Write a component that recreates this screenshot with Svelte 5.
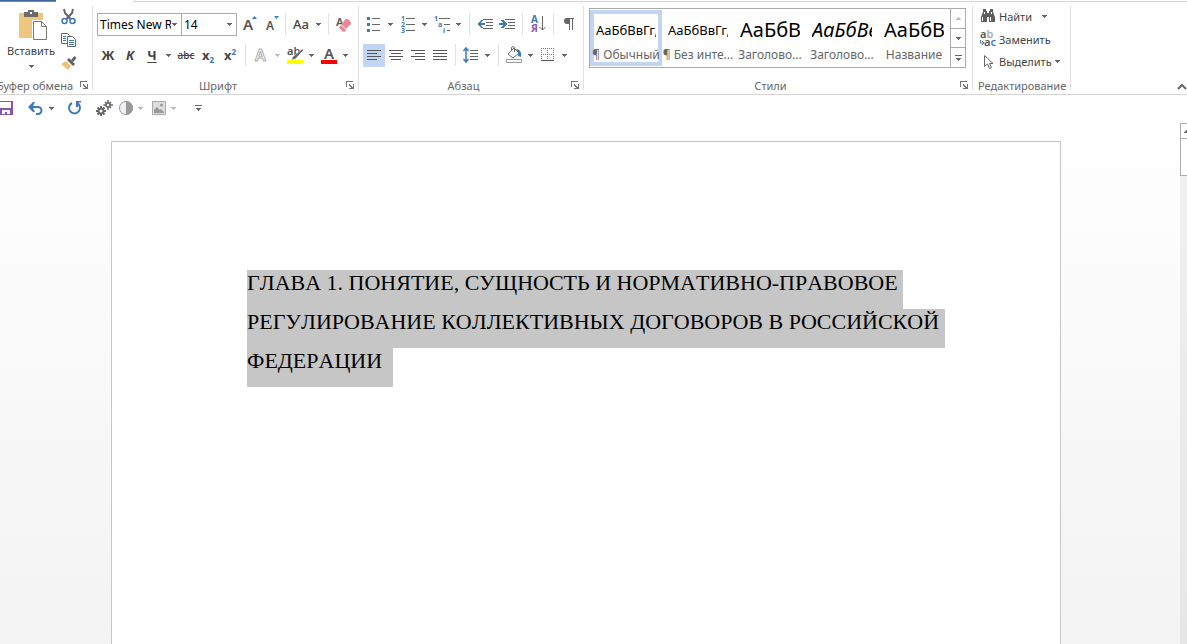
<script lang="ts">
  interface StyleItem {
    name: string;
    sample: string;
    kind: string;
  }

  const styles: StyleItem[] = [
    { name: "¶ Обычный", sample: "АаБбВвГг,", kind: "normal" },
    { name: "¶ Без инте...", sample: "АаБбВвГг,", kind: "normal" },
    { name: "Заголово...", sample: "АаБбВ", kind: "heading" },
    { name: "Заголово...", sample: "АаБбВв", kind: "heading italic" },
    { name: "Название", sample: "АаБбВ", kind: "heading" },
  ];

  const lines = [
    "ГЛАВА 1. ПОНЯТИЕ, СУЩНОСТЬ И НОРМАТИВНО-ПРАВОВОЕ ",
    "РЕГУЛИРОВАНИЕ КОЛЛЕКТИВНЫХ ДОГОВОРОВ В РОССИЙСКОЙ ",
    "ФЕДЕРАЦИИ  ",
  ];

  const alignments = [
    { id: "left", label: "По левому краю", path: "M0 1h14M0 4h10M0 7h14M0 10h10" },
    { id: "center", label: "По центру", path: "M0 1h14M2 4h10M0 7h14M2 10h10" },
    { id: "right", label: "По правому краю", path: "M0 1h14M4 4h10M0 7h14M4 10h10" },
    { id: "justify", label: "По ширине", path: "M0 1h14M0 4h14M0 7h14M0 10h14" },
  ];

  let activeStyle = $state(0);
  let align = $state("left");
</script>

{#snippet caret()}
  <svg class="caret" width="5" height="3" viewBox="0 0 5 3"><path d="M0 0h5v1h-1v1h-1v1h-1v-1h-1v-1h-1z" /></svg>
{/snippet}

{#snippet drop(label: string, faded = false)}
  <button class="drop" class:faded aria-label={label}>{@render caret()}</button>
{/snippet}

{#snippet launcher(label: string)}
  <button class="launcher" aria-label={label}>
    <svg width="8" height="8" viewBox="0 0 8 8" class="crisp">
      <path d="M0 0h7v1h-6v5h-1zM3 3h1v1h1v1h1v1h1v-3h1v5h-5v-1h2v-1h-1v-1h-1z" fill="#777" />
    </svg>
  </button>
{/snippet}

<div class="app">
  <div class="tabs">
    <span class="file-tab"></span>
    <span class="open-tab"></span>
    <span class="tab-line"></span>
  </div>

  <div class="ribbon">
    <section class="group clipboard">
      <div class="body">
        <button class="paste">
          <svg width="32" height="30" viewBox="-4 0 32 30">
            <path d="M0 3h24v25H0z" fill="#eec77f" />
            <path d="M5 2h4V0h6v2h4v5H5z" fill="#6b6b6b" />
            <path d="M11 2h2v2h-2z" fill="#fff" />
            <path d="M13 10h11l5 5v15H13z" fill="#fff" />
            <path d="M14.500 11.500h8l5 5v13h-13z" fill="#fff" stroke="#777" />
            <path d="M22.500 11.500v5h5" fill="none" stroke="#777" />
          </svg>
          <span>Вставить</span>
          {@render caret()}
        </button>
        <div class="tools">
          <button aria-label="Вырезать">
            <svg width="16" height="16" viewBox="0 0 16 16" fill="none">
              <path d="M3 0l1 4 5.500 6M12 0l-1 4-5.500 6" stroke="#666" stroke-width="2" />
              <circle cx="3.500" cy="12" r="2.500" stroke="#3f7ab8" stroke-width="1.500" />
              <circle cx="11.500" cy="12" r="2.500" stroke="#3f7ab8" stroke-width="1.500" />
            </svg>
          </button>
          <button aria-label="Копировать">
            <svg width="16" height="15" viewBox="0 0 16 15" fill="#fff" stroke="#666">
              <path d="M.5.5h6l2 2v8h-8z" />
              <path d="M2 3.500h3M2 5.500h3M2 7.500h3" stroke="#3f7ab8" />
              <path d="M6.500 3.500h5l3 3v7h-8z" />
              <path d="M8 7.500h5M8 9.500h5M8 11.500h5" stroke="#3f7ab8" />
            </svg>
          </button>
          <button aria-label="Формат по образцу">
            <svg width="16" height="15" viewBox="0 0 16 15">
              <path d="M0 8l5-3 5 5-3 4z" fill="#eec07a" />
              <path d="M6 4l2-2 6 6-2 2z" fill="#5f5f5f" />
              <path d="M10 4l3.500-4 2 2L12 6z" fill="#5f5f5f" />
            </svg>
          </button>
        </div>
      </div>
      <footer><span class="title">Буфер обмена</span>{@render launcher("Параметры буфера обмена")}</footer>
    </section>

    <section class="group font">
      <div class="body rows">
        <div class="row">
          <label class="combo family">
            <select aria-label="Шрифт"><option>Times New R</option></select>{@render caret()}
          </label>
          <label class="combo size">
            <select aria-label="Размер шрифта"><option>14</option></select>{@render caret()}
          </label>
          <button class="tool" aria-label="Увеличить размер">
            <svg width="18" height="18" viewBox="0 0 18 18">
              <text x="3" y="15" class="glyph" font-size="15">A</text>
              <path d="M12 4h5l-2.500-3z" fill="#3f7ab8" />
            </svg>
          </button>
          <button class="tool" aria-label="Уменьшить размер">
            <svg width="18" height="18" viewBox="0 0 18 18">
              <text x="4" y="15" class="glyph" font-size="12">A</text>
              <path d="M12 1h5l-2.500 3z" fill="#3f7ab8" />
            </svg>
          </button>
          <span class="divider narrow"></span>
          <button class="tool case">Aa</button>
          {@render drop("Регистр")}
          <span class="divider narrow"></span>
          <button class="tool" aria-label="Очистить форматирование">
            <svg width="16" height="18" viewBox="0 0 16 18">
              <text x="1" y="11" class="glyph" font-size="11">A</text>
              <path d="M4.500 11.500l6-7.500q1.500-1 4 1.500t1 4l-5 5z" fill="#e8899a" />
              <path d="M3.500 12.500l4 4.500h3l1-2-5.500-5.500z" fill="#e8899a" stroke="#fff" stroke-width=".8" />
            </svg>
          </button>
        </div>
        <div class="row">
          <button class="tool bold">Ж</button>
          <button class="tool bold italic">К</button>
          <button class="tool bold underline">Ч</button>
          {@render drop("Вид подчёркивания")}
          <button class="tool strike">abc</button>
          <button class="tool bold index">x<sub>2</sub></button>
          <button class="tool bold index">x<sup>2</sup></button>
          <span class="divider"></span>
          <button class="tool" aria-label="Текстовые эффекты">
            <svg width="18" height="20" viewBox="0 0 18 20">
              <text x="3" y="16" font-size="16" class="outline">A</text>
            </svg>
          </button>
          {@render drop("Эффекты", true)}
          <button class="tool" aria-label="Цвет выделения текста">
            <svg width="18" height="20" viewBox="0 0 18 20">
              <text x="1" y="10" class="glyph" font-size="11">ab</text>
              <path d="M16 4l1.500 1-8 9-4 1 1-3z" fill="#666" stroke="#fff" stroke-width=".5" />
              <path d="M1 15h16v4H1z" fill="#ff0" />
            </svg>
          </button>
          {@render drop("Выбрать цвет выделения")}
          <button class="tool" aria-label="Цвет текста">
            <svg width="18" height="20" viewBox="0 0 18 20">
              <text x="4" y="14" class="glyph" font-size="15">A</text>
              <path d="M1 15h16v4H1z" fill="#f00" />
            </svg>
          </button>
          {@render drop("Выбрать цвет текста")}
        </div>
      </div>
      <footer><span class="title">Шрифт</span>{@render launcher("Параметры шрифта")}</footer>
    </section>

    <section class="group paragraph">
      <div class="body rows">
        <div class="row">
          <button class="tool" aria-label="Маркеры">
            <svg width="14" height="16" viewBox="0 0 14 16" class="crisp">
              <path d="M0 1h3v3H0zM0 7h3v3H0zM0 13h3v3H0z" fill="#3f7ab8" />
              <path d="M5 2h8v1H5zM5 8h8v1H5zM5 14h8v1H5z" fill="#666" />
            </svg>
          </button>
          {@render drop("Библиотека маркеров")}
          <button class="tool" aria-label="Нумерация">
            <svg width="16" height="18" viewBox="0 0 16 18">
              <g class="digits"><text x="1" y="6">1</text><text x="1" y="12">2</text><text x="1" y="18">3</text></g>
              <path d="M6 3h9v1H6zM6 9h9v1H6zM6 15h9v1H6z" fill="#666" />
            </svg>
          </button>
          {@render drop("Библиотека нумерации")}
          <button class="tool" aria-label="Многоуровневый список">
            <svg width="18" height="18" viewBox="0 0 18 18">
              <g class="digits"><text x="1" y="6">1</text><text x="5" y="12">a</text><text x="10" y="18">i</text></g>
              <path d="M6 3h11v1H6zM11 9h6v1h-6zM14 15h3v1h-3z" fill="#666" />
            </svg>
          </button>
          {@render drop("Библиотека списков")}
          <span class="divider"></span>
          <button class="tool" aria-label="Уменьшить отступ">
            <svg width="16" height="12" viewBox="0 0 16 12" class="crisp">
              <path d="M6 1h10v1H6zM9 4h7v1H9zM9 7h7v1H9zM6 10h10v1H6z" fill="#666" />
              <path d="M0 6l4-4h2L4 5h4v2H4l2 3H4z" fill="#3f7ab8" />
            </svg>
          </button>
          <button class="tool" aria-label="Увеличить отступ">
            <svg width="16" height="12" viewBox="0 0 16 12" class="crisp">
              <path d="M6 1h10v1H6zM9 4h7v1H9zM9 7h7v1H9zM6 10h10v1H6z" fill="#666" />
              <path d="M8 6L4 2H2l2 3H0v2h4L2 10h2z" fill="#3f7ab8" />
            </svg>
          </button>
          <span class="divider"></span>
          <button class="tool" aria-label="Сортировка">
            <svg width="16" height="18" viewBox="0 0 16 18">
              <text x="1" y="8" font-size="10" class="sort-a">А</text>
              <text x="1" y="17" font-size="10" class="sort-z">Я</text>
              <path d="M12.500 1v14M9.500 12l3 3 3-3" fill="none" stroke="#666" />
            </svg>
          </button>
          <span class="divider"></span>
          <button class="tool" aria-label="Отобразить все знаки">
            <svg width="12" height="14" viewBox="0 0 12 14">
              <path d="M4 1h7v1h-1v11H9V2H7v11H6V7H4a3 3 0 010-6z" fill="#666" />
            </svg>
          </button>
        </div>
        <div class="row">
          {#each alignments as item}
            <button
              class="tool"
              class:active={align === item.id}
              aria-label={item.label}
              onclick={() => (align = item.id)}
            >
              <svg width="14" height="11" viewBox="0 .5 14 11" stroke="#555"><path d={item.path} /></svg>
            </button>
          {/each}
          <span class="divider"></span>
          <button class="tool" aria-label="Интервал">
            <svg width="16" height="16" viewBox="0 0 16 16">
              <path d="M3 1v14M.5 4L3 1l2.500 3M.5 12L3 15l2.500-3" fill="none" stroke="#3f7ab8" stroke-width="1.500" />
              <path d="M7 3h8v1H7zM7 6h8v1H7zM7 9h8v1H7zM7 12h8v1H7z" fill="#666" />
            </svg>
          </button>
          {@render drop("Междустрочный интервал")}
          <span class="divider"></span>
          <button class="tool" aria-label="Заливка">
            <svg width="18" height="18" viewBox="0 0 18 18">
              <path d="M3 8l6-6 5 5-6 5z" fill="#fff" stroke="#666" />
              <path d="M6.500 5V1.500q1.500-2 3 0V6" fill="none" stroke="#666" />
              <path d="M11 3q6 0 5 8l-3-1V7z" fill="#3f7ab8" />
              <path d="M1.500 13.500h15v3h-15z" fill="#fff" stroke="#999" />
            </svg>
          </button>
          {@render drop("Цвет заливки")}
          <button class="tool" aria-label="Границы">
            <svg width="14" height="14" viewBox="0 0 14 14" fill="none" stroke="#777">
              <path d="M0 .5h13M0 6.500h13M.5 0v13M6.500 0v13M12.500 0v13" stroke-dasharray="1 1" />
              <path d="M0 12.500h13" stroke="#555" />
            </svg>
          </button>
          {@render drop("Вид границ")}
        </div>
      </div>
      <footer><span class="title">Абзац</span>{@render launcher("Параметры абзаца")}</footer>
    </section>

    <section class="group">
      <div class="body">
        <div class="gallery">
          {#each styles as item, i}
            <button class="style" class:selected={activeStyle === i} onclick={() => (activeStyle = i)}>
              <span class="sample {item.kind}">{item.sample}</span>
              <span class="name">{item.name}</span>
            </button>
          {/each}
          <div class="scroller">
            <button class="faded" aria-label="Вверх"><span class="flip">{@render caret()}</span></button>
            <button aria-label="Вниз">{@render caret()}</button>
            <button class="more" aria-label="Дополнительно"><i></i>{@render caret()}</button>
          </div>
        </div>
      </div>
      <footer><span class="title">Стили</span>{@render launcher("Окно стилей")}</footer>
    </section>

    <section class="group editing">
      <div class="body">
        <button>
          <svg width="16" height="14" viewBox="0 0 16 14">
            <path d="M3 0h3v2h1v2h2V2h1V0h3v3l2 5v5H9V8H7v5H1V8l2-5z" fill="#5f5f5f" />
            <path d="M2.500 8v4M10.500 8v4M4.500 3v2M11.500 3v2" stroke="#fff" />
          </svg>
          <span>Найти</span>
          <span class="gap"></span>{@render caret()}
        </button>
        <button>
          <svg width="16" height="18" viewBox="0 0 16 18" font-size="11">
            <text x="0" y="8" class="glyph">a<tspan class="pale">b</tspan></text>
            <text x="4" y="16" class="glyph">a<tspan class="blue">c</tspan></text>
            <path d="M.5 10v3h3M2 11l2 2-2 2" fill="none" stroke="#3f7ab8" />
          </svg>
          <span>Заменить</span>
        </button>
        <button>
          <svg width="16" height="16" viewBox="0 0 16 16">
            <path d="M4.500 1.500v11l3-2.500 2 4.500 2-1-2-4h3.500z" fill="#fff" stroke="#666" />
          </svg>
          <span>Выделить</span>{@render caret()}
        </button>
      </div>
      <footer><span class="title">Редактирование</span></footer>
    </section>

    <button class="collapse" aria-label="Свернуть ленту">
      <svg width="10" height="6" viewBox="0 0 10 6"><path d="M1 5l4-4 4 4" fill="none" stroke="#666" stroke-width="2" /></svg>
    </button>
  </div>

  <div class="quick">
    <button class="save" aria-label="Сохранить">
      <svg width="13" height="14" viewBox="1 0 13 14">
        <path d="M0 0h14v14H0z" fill="#8a55b0" />
        <path d="M1 1h11v6H1zM3 9h8v4H8v-2H6v2H3z" fill="#fff" />
      </svg>
    </button>
    <button class="undo" aria-label="Отменить">
      <svg width="15" height="13" viewBox="0 0 15 13">
        <path d="M3 5h7a3.500 3.500 0 010 7H8" fill="none" stroke="#3f7ab8" stroke-width="2" />
        <path d="M0 5l5-5h2L5 4v2l2 4H5z" fill="#3f7ab8" />
      </svg>
    </button>
    {@render drop("История отмены")}
    <button class="redo" aria-label="Повторить">
      <svg width="15" height="14" viewBox="0 0 15 14">
        <path d="M5 2a5.500 5.500 0 105 0" fill="none" stroke="#3f7ab8" stroke-width="2" />
        <path d="M8 0h6v1.500h-3V6H9V0z" fill="#3f7ab8" />
      </svg>
    </button>
    <button class="macro" aria-label="Параметры">
      <svg width="18" height="17" viewBox="0 0 18 17" fill="none" stroke="#666">
        <circle cx="6" cy="11" r="2.500" stroke-width="2" />
        <path d="M6 6v2M6 14v2M1 11h2M9 11h2M2.500 7.500L4 9M8 13l1.500 1.500M9.500 7.500L8 9M4 13l-1.500 1.500" stroke-width="2" />
        <circle cx="13" cy="5" r="2" stroke-width="1.500" />
        <path d="M13 0v3M13 7v3M8.500 5H11M15 5h3M10 2l1.500 1.500M14.500 6.500L16 8M16 2l-1.500 1.500" stroke-width="1.500" />
      </svg>
    </button>
    <button class="contrast faded" aria-label="Контраст">
      <svg width="14" height="14" viewBox="0 0 14 14">
        <circle cx="7" cy="7" r="6.500" fill="#f2eef5" stroke="#999" />
        <path d="M7 0a7 7 0 010 14z" fill="#999" />
      </svg>
    </button>
    {@render drop("Выбор контраста", true)}
    <button class="picture faded" aria-label="Рисунок">
      <svg width="14" height="14" viewBox="0 0 14 14">
        <path d="M.5.5h13v13H.5z" fill="#dedce0" stroke="#aaa" />
        <path d="M2 12V9l3-3 3 3 1-1 3 3v1z" fill="#999" />
        <circle cx="9.500" cy="4" r="1.500" fill="#999" />
      </svg>
    </button>
    {@render drop("Выбор рисунка", true)}
    <button class="more customize" aria-label="Настройка панели"><i></i>{@render caret()}</button>
  </div>

  <main>
    <article class="page">
      <h1>
        {#each lines as line}<span>{line}</span>{/each}
      </h1>
    </article>
    <div class="scrollbar">
      <button aria-label="Прокрутить вверх"><span class="flip">{@render caret()}</span></button>
      <div class="thumb"></div>
    </div>
  </main>
</div>

<style>
  :global(body) {
    margin: 0;
    background: #fff;
  }
  .app {
    display: flex;
    flex-direction: column;
    height: 100vh;
    overflow: hidden;
    background: linear-gradient(#fff 100px, #f3f3f3);
    font-family: "Noto Sans", "Open Sans", sans-serif;
    font-size: 12px;
    color: #444;
  }
  button {
    display: flex;
    align-items: center;
    justify-content: center;
    padding: 0;
    border: none;
    background: none;
    color: inherit;
    font: inherit;
  }
  svg {
    display: block;
    flex: none;
    overflow: visible;
  }
  .crisp,
  .caret {
    shape-rendering: crispEdges;
  }
  .caret {
    fill: #666;
  }
  .faded .caret {
    fill: #bbb;
  }
  .flip {
    transform: rotate(180deg);
  }
  .glyph {
    fill: #555;
    font-weight: 600;
  }

  .tabs {
    display: flex;
    height: 2px;
    background: #fff;
  }
  .file-tab {
    width: 56px;
    background: linear-gradient(#2b579a, #7f9bc6);
  }
  .open-tab {
    width: 78px;
    border-right: 1px solid #d4d4d4;
  }
  .tab-line {
    flex: 1;
    border-bottom: 1px solid #d4d4d4;
  }

  .ribbon {
    display: flex;
    height: 92px;
    background: #fff;
    border-bottom: 1px solid #d4d4d4;
  }
  .group {
    display: flex;
    flex-direction: column;
    position: relative;
    padding: 6px 4px 0;
  }
  .group::after {
    content: "";
    position: absolute;
    top: 4px;
    right: 0;
    bottom: 4px;
    border-right: 1px solid #e1e1e1;
  }
  .body {
    display: flex;
    height: 68px;
  }
  footer {
    display: flex;
    align-items: center;
    height: 18px;
    font-size: 11px;
    color: #666;
  }
  .title {
    flex: 1;
    min-width: 0;
    padding-right: 7px;
    text-align: center;
    white-space: nowrap;
  }
  .launcher {
    width: 9px;
    height: 16px;
    justify-content: flex-start;
  }

  .clipboard {
    width: 85px;
  }
  .font {
    width: 258px;
  }
  .paragraph {
    width: 217px;
  }
  .clipboard .title {
    display: flex;
    justify-content: flex-end;
  }
  .paste {
    flex-direction: column;
    justify-content: flex-start;
    width: 54px;
    padding-top: 2px;
    font-size: 11px;
  }
  .paste span {
    line-height: 18px;
    padding: 2px 0 5px;
  }
  .tools {
    display: flex;
    flex-direction: column;
    justify-content: space-between;
    height: 68px;
    margin-top: -2px;
  }
  .tools button {
    width: 22px;
    height: 22px;
  }

  .rows {
    flex-direction: column;
    gap: 7px;
  }
  .row {
    display: flex;
    align-items: center;
    height: 24px;
    padding-top: 4px;
  }
  .row + .row {
    padding-top: 0;
  }
  .tool {
    width: 22px;
    height: 23px;
  }
  .tool.active {
    background: #c2d5f2;
  }
  .drop {
    justify-content: flex-start;
    width: 12px;
    height: 23px;
    padding-left: 3px;
  }
  .divider {
    width: 1px;
    height: 22px;
    margin: 0 4px;
    background: #e1e1e1;
  }
  .divider.narrow {
    margin: 0 3px;
  }
  .combo {
    display: flex;
    align-items: center;
    box-sizing: border-box;
    height: 23px;
    padding-right: 4px;
    border: 1px solid #ababab;
  }
  .combo select {
    flex: 1;
    min-width: 0;
    padding: 0 0 0 2px;
    border: none;
    appearance: none;
    background: none;
    color: #000;
    font: inherit;
  }
  .family {
    width: 85px;
  }
  .family select {
    margin-right: 1px;
  }
  .size {
    width: 56px;
    margin: 0 1px 0 -1px;
  }
  .case {
    width: 24px;
    font-size: 13px;
    font-weight: 500;
  }
  .bold {
    font-size: 13px;
    font-weight: 700;
  }
  .italic {
    font-style: italic;
  }
  .underline {
    text-decoration: underline;
    text-underline-offset: 2px;
  }
  .strike {
    font-size: 10px;
    font-weight: 500;
    text-decoration: line-through;
  }
  .index sub,
  .index sup {
    padding: 3px 0;
    font-size: 8px;
    line-height: 9px;
    color: #3f7ab8;
  }
  .index sub {
    align-self: flex-end;
  }
  .index sup {
    align-self: flex-start;
  }
  .outline {
    fill: #fff;
    stroke: #b0b0b0;
    font-weight: 600;
  }
  .digits {
    fill: #3f7ab8;
    font-size: 7px;
    font-weight: 700;
  }
  .sort-a {
    fill: #3f7ab8;
    font-weight: 700;
  }
  .sort-z {
    fill: #8a55b0;
    font-weight: 700;
  }

  .gallery {
    display: flex;
    box-sizing: border-box;
    height: 60px;
    margin: 0 3px 0 1px;
    border: 1px solid #ababab;
  }
  .style {
    flex-direction: column;
    box-sizing: border-box;
    width: 72px;
    height: 56px;
    margin-top: 1px;
    border: 4px solid transparent;
  }
  .style.selected {
    border-color: #c2d5f2;
  }
  .sample {
    width: 60px;
    height: 32px;
    overflow: hidden;
    color: #000;
    font-size: 13px;
    line-height: 32px;
    text-align: left;
    white-space: nowrap;
  }
  .sample.heading {
    font-size: 20px;
  }
  .name {
    height: 16px;
    line-height: 18px;
    color: #666;
    white-space: nowrap;
  }
  .scroller {
    display: flex;
    flex-direction: column;
    border-left: 1px solid #ababab;
  }
  .scroller button {
    flex: 1;
    width: 14px;
  }
  .scroller button + button {
    border-top: 1px solid #ababab;
  }
  .more {
    flex-direction: column;
    gap: 2px;
  }
  .more i {
    width: 7px;
    height: 1px;
    background: #666;
  }

  .editing {
    padding: 6px 5px 0;
  }
  .editing .title {
    padding: 0;
  }
  .editing .body {
    flex-direction: column;
    margin-top: -3px;
    padding-bottom: 3px;
    font-size: 11px;
  }
  .editing .body button {
    justify-content: flex-start;
    gap: 3px;
    height: 23px;
    padding-left: 2px;
  }
  .gap {
    width: 4px;
  }
  .pale {
    fill: #aaa;
  }
  .blue {
    fill: #3f7ab8;
  }
  .collapse {
    align-self: flex-end;
    margin: 0 0 4px auto;
  }

  .quick {
    display: flex;
    align-items: center;
    height: 26px;
    padding-bottom: 2px;
  }
  .save {
    margin-right: 15px;
  }
  .undo {
    margin-right: 3px;
  }
  .redo {
    margin: 0 13px 0 9px;
  }
  .contrast {
    margin: 0 2px 0 6px;
  }
  .picture {
    margin: 0 2px 0 5px;
  }
  .customize {
    margin-left: 15px;
  }

  main {
    display: flex;
    flex: 1;
  }
  .page {
    box-sizing: border-box;
    flex: 0 1 950px;
    margin: 18px auto 0;
    padding: 128px 104px 0 135px;
    border: 1px solid #c6c6c6;
    border-bottom: none;
    background: #fff;
  }
  h1 {
    margin: 0;
    color: #000;
    font: 22px/25px "Liberation Serif", serif;
    font-kerning: none;
  }
  h1 span {
    display: block;
    width: fit-content;
    padding-bottom: 14px;
    background: #c6c6c6;
    white-space: pre;
  }
  .scrollbar {
    width: 7px;
    margin-left: 8px;
    overflow: hidden;
    background: rgba(0, 0, 0, 0.05);
  }
  .scrollbar button,
  .thumb {
    box-sizing: border-box;
    width: 17px;
    height: 16px;
    border: 1px solid #ababab;
    background: #fff;
  }
  .scrollbar button {
    justify-content: flex-start;
    padding-left: 3px;
  }
  .thumb {
    height: 38px;
    margin-top: -1px;
  }
</style>
